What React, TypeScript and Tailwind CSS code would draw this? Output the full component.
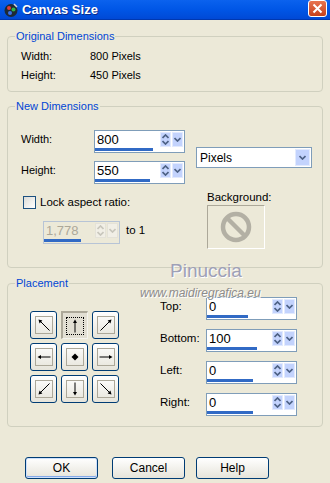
import React from "react";

const LEGEND = "absolute -top-[7px] left-[7px] px-[1px] bg-[#ECE9D8] text-[#0046D5] text-[11px] leading-[13px]";

function Chevron({ up, dim }: { up?: boolean; dim?: boolean }) {
  return (
    <svg width="7" height="5" viewBox="0 0 7 5">
      <path
        d={up ? "M0.5 4 L3.5 1 L6.5 4" : "M0.5 1 L3.5 4 L6.5 1"}
        stroke={dim ? "#C8C6BC" : "#4D6185"}
        strokeWidth="1.7"
        fill="none"
      />
    </svg>
  );
}

function SpinButtons({ dim }: { dim?: boolean }) {
  const bg = dim ? "bg-[#F1EFE6] border-[#E4E2D8]" : "bg-[#C3D3FD] border-[#E2EAFE]";
  return (
    <div className="flex gap-[1px] pr-[1px] pt-[1px]">
      <div className={`w-[11px] h-[15px] border flex flex-col items-center justify-center gap-[1px] ${bg}`}>
        <Chevron up dim={dim} />
        <Chevron dim={dim} />
      </div>
      <div className={`w-[11px] h-[15px] border flex items-center justify-center ${bg}`}>
        <Chevron dim={dim} />
      </div>
    </div>
  );
}

function NumBox({ value, fill, width = 91, disabled }: { value: string; fill: number; width?: number; disabled?: boolean }) {
  return (
    <div
      className={`flex flex-col h-[23px] border ${disabled ? "border-[#B7C4D6] bg-[#ECE9D8]" : "border-[#7F9DB9] bg-white"}`}
      style={{ width }}
    >
      <div className="flex flex-1">
        <span className={`flex-1 pl-[2px] text-[13px] leading-[17px] ${disabled ? "text-[#ACA899]" : "text-black"}`}>{value}</span>
        <SpinButtons dim={disabled} />
      </div>
      <div className="h-[4px] mb-[1px]">
        <div className="h-full bg-[#316AC5]" style={{ width: fill }} />
      </div>
    </div>
  );
}

function XpButton({ children, def, w = 73 }: { children: React.ReactNode; def?: boolean; w?: number }) {
  return (
    <div
      className={`h-[22px] rounded-[3px] border border-[#003C74] bg-gradient-to-b from-white to-[#E6E4DA] flex items-center justify-center text-[12px] text-black ${
        def ? "shadow-[inset_0_0_0_1px_#CDE0FC,inset_0_-1px_0_1px_#84A9E8]" : ""
      }`}
      style={{ width: w }}
    >
      {children}
    </div>
  );
}

function Arrow({ dx, dy }: { dx: number; dy: number }) {
  if (dx === 0 && dy === 0) {
    return (
      <svg width="14" height="14" viewBox="0 0 14 14">
        <path d="M7 3.5 L10.5 7 L7 10.5 L3.5 7 Z" fill="#000" />
      </svg>
    );
  }
  const diag = dx !== 0 && dy !== 0;
  const len = diag ? 5.5 : 6.5;
  const n = Math.hypot(dx, dy);
  const ux = dx / n;
  const uy = dy / n;
  const tx = 7 + dx * len;
  const ty = 7 + dy * len;
  const sx = 7 - dx * len;
  const sy = 7 - dy * len;
  const bx = tx - ux * 3.5;
  const by = ty - uy * 3.5;
  const px = -uy * 2;
  const py = ux * 2;
  return (
    <svg width="14" height="14" viewBox="0 0 14 14">
      <line x1={sx} y1={sy} x2={bx} y2={by} stroke="#000" strokeWidth="1" />
      <path d={`M${tx} ${ty} L${bx + px} ${by + py} L${bx - px} ${by - py} Z`} fill="#000" />
    </svg>
  );
}

function PlaceButton({ dx, dy, pressed }: { dx: number; dy: number; pressed?: boolean }) {
  if (pressed) {
    return (
      <div className="w-[27px] h-[28px] bg-[#E2DFD3] border-t-2 border-l-2 border-[#ACA899] border-r border-b border-r-[#F4F3EE] border-b-[#F4F3EE] flex items-center justify-center">
        <div className="w-[18px] h-[18px] border border-dotted border-black flex items-center justify-center">
          <Arrow dx={dx} dy={dy} />
        </div>
      </div>
    );
  }
  return (
    <div className="w-[27px] h-[28px] rounded-[3px] border border-[#003C74] bg-gradient-to-b from-white to-[#E6E4DA] flex items-center justify-center">
      <div className="w-[18px] h-[18px] border border-[#ACA899] flex items-center justify-center">
        <Arrow dx={dx} dy={dy} />
      </div>
    </div>
  );
}

function TitleIcon() {
  return (
    <svg width="16" height="16" viewBox="0 0 16 16">
      <circle cx="8" cy="8.5" r="6.5" fill="#1E2A35" />
      <circle cx="6" cy="6" r="2" fill="#E23A3A" />
      <circle cx="10.5" cy="7.5" r="2" fill="#2FB34A" />
      <circle cx="7" cy="11" r="2" fill="#3A6FE8" />
      <path d="M11 2 L14 5" stroke="#D8D8D8" strokeWidth="1.5" />
    </svg>
  );
}

export default function App() {
  const grid: [number, number][] = [
    [-1, -1], [0, -1], [1, -1],
    [-1, 0], [0, 0], [1, 0],
    [-1, 1], [0, 1], [1, 1],
  ];
  const margins = [
    { label: "Top:", value: "0", fill: 41 },
    { label: "Bottom:", value: "100", fill: 50 },
    { label: "Left:", value: "0", fill: 46 },
    { label: "Right:", value: "0", fill: 46 },
  ];

  return (
    <div className="relative w-[330px] h-[483px] overflow-hidden bg-[#ECE9D8] font-['Liberation_Sans',Arial,sans-serif] text-[11px] text-black">
      {/* Title bar */}
      <div className="h-[20px] flex items-center bg-gradient-to-b from-[#0B62EE] via-[#0056E6] to-[#0049D6] border-b border-[#0038B0]">
        <div className="ml-[3px]">
          <TitleIcon />
        </div>
        <span className="ml-[3px] text-white font-bold text-[13px] [text-shadow:1px_1px_0_#0A2A8A]">Canvas Size</span>
        <div className="ml-auto mr-[3px] w-[19px] h-[17px] -mt-[3px] rounded-[3px] border border-white bg-gradient-to-b from-[#E8734F] to-[#C6401A] flex items-center justify-center">
          <svg width="11" height="11" viewBox="0 0 11 11">
            <path d="M1.5 1.5 L9.5 9.5 M9.5 1.5 L1.5 9.5" stroke="#fff" strokeWidth="2" />
          </svg>
        </div>
      </div>

      <div className="px-[7px]">
        {/* Original Dimensions */}
        <div className="relative mt-[16px] h-[56px] border border-[#D0D0BF] rounded-[4px] pt-[10px] pl-[13px]">
          <span className={LEGEND}>Original Dimensions</span>
          <div className="flex h-[19px] items-center">
            <span className="w-[69px]">Width:</span>
            <span>800 Pixels</span>
          </div>
          <div className="flex h-[19px] items-center">
            <span className="w-[69px]">Height:</span>
            <span>450 Pixels</span>
          </div>
        </div>

        {/* New Dimensions */}
        <div className="relative mt-[14px] h-[162px] border border-[#D0D0BF] rounded-[4px] pt-[23px]">
          <span className={LEGEND}>New Dimensions</span>
          <div className="flex">
            <div className="flex flex-col gap-[8px]">
              <div className="flex items-center">
                <span className="w-[86px] pl-[13px] -mt-[4px]">Width:</span>
                <NumBox value="800" fill={58} />
              </div>
              <div className="flex items-center">
                <span className="w-[86px] pl-[13px] -mt-[4px]">Height:</span>
                <NumBox value="550" fill={55} />
              </div>
            </div>
            <div className="ml-[11px] mt-[17px] w-[116px] h-[21px] border border-[#7F9DB9] bg-white flex items-center">
              <span className="flex-1 pl-[3px] text-[12px]">Pixels</span>
              <div className="w-[15px] h-[17px] mr-[1px] bg-[#C3D3FD] border border-[#E2EAFE] flex items-center justify-center">
                <Chevron />
              </div>
            </div>
          </div>

          <div className="flex mt-[12px]">
            <div className="w-[199px] pl-[15px]">
              <div className="flex items-center h-[13px]">
                <div className="w-[13px] h-[13px] border border-[#1C5180] bg-gradient-to-br from-[#DCDCD7] to-white" />
                <span className="ml-[4px] text-[11.5px]">Lock aspect ratio:</span>
              </div>
              <div className="flex items-center mt-[12px] ml-[20px]">
                <NumBox value="1,778" fill={37} width={77} disabled />
                <span className="ml-[6px] text-[11.5px] -mt-[4px]">to 1</span>
              </div>
            </div>
            <div className="flex flex-col -mt-[6px]">
              <span className="text-[11.5px] leading-[14px]">Background:</span>
              <div className="mt-[1px] w-[58px] h-[44px] border border-t-[#ACA899] border-l-[#ACA899] border-r-white border-b-white flex items-center justify-center">
                <svg width="32" height="32" viewBox="0 0 32 32">
                  <circle cx="16" cy="16" r="13" stroke="#B3B0A4" strokeWidth="4.5" fill="none" />
                  <path d="M7 7 L25 25" stroke="#B3B0A4" strokeWidth="4.5" />
                </svg>
              </div>
            </div>
          </div>
        </div>

        {/* Placement */}
        <div className="relative mt-[15px] h-[144px] border border-[#D0D0BF] rounded-[4px] flex">
          <span className={LEGEND}>Placement</span>
          <div className="ml-[22px] mt-[27px] grid grid-cols-[27px_27px_27px] gap-x-[4px] gap-y-[4px] self-start">
            {grid.map(([dx, dy], i) => (
              <PlaceButton key={i} dx={dx} dy={dy} pressed={i === 1} />
            ))}
          </div>
          <div className="ml-[41px] mt-[13px] flex flex-col gap-[9px]">
            {margins.map((m) => (
              <div key={m.label} className="flex items-center">
                <span className="w-[46px] text-[11.5px] -mt-[4px]">{m.label}</span>
                <NumBox value={m.value} fill={m.fill} />
              </div>
            ))}
          </div>
        </div>
      </div>

      {/* Buttons */}
      <div className="flex mt-[30px] pl-[25px]">
        <XpButton def>OK</XpButton>
        <div className="ml-[14px]">
          <XpButton>Cancel</XpButton>
        </div>
        <div className="ml-[11px]">
          <XpButton>Help</XpButton>
        </div>
      </div>

      {/* Watermark */}
      <span className="absolute left-[170px] top-[259px] text-[19px] leading-[24px] text-[#9EA0B6] [text-shadow:1px_1px_0_#FFFFFF]">
        Pinuccia
      </span>
      <span className="absolute left-[140px] top-[286px] italic text-[12px] leading-[14px] text-[#8C8C8C] [text-shadow:1px_1px_0_#FFFFFF]">
        www.maidiregrafica.eu
      </span>
    </div>
  );
}
